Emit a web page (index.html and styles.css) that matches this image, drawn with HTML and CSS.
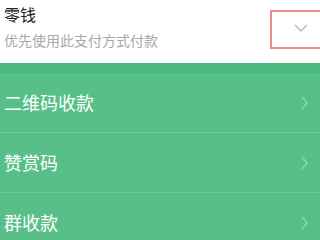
FILE: index.html
```html
<!DOCTYPE html>
<html>
<head>
<meta charset="utf-8">
<link rel="stylesheet" href="styles.css">
</head>
<body>
<div class="header">
  <div class="info">
    <div class="title">零钱</div>
    <div class="sub">优先使用此支付方式付款</div>
  </div>
  <div class="dropbox">
    <svg width="14" height="8" viewBox="0 0 14 8"><path d="M1 1 L7 7 L13 1" fill="none" stroke="#b8b8b8" stroke-width="1.4"/></svg>
  </div>
</div>
<div class="band"></div>
<div class="list">
  <div class="row"><span>二维码收款</span><svg class="chev" width="7" height="14" viewBox="0 0 7 14"><path d="M1 1 L6 7 L1 13" fill="none" stroke="#8fdcae" stroke-width="1.3"/></svg></div>
  <div class="row"><span>赞赏码</span><svg class="chev" width="7" height="14" viewBox="0 0 7 14"><path d="M1 1 L6 7 L1 13" fill="none" stroke="#8fdcae" stroke-width="1.3"/></svg></div>
  <div class="row"><span>群收款</span><svg class="chev" width="7" height="14" viewBox="0 0 7 14"><path d="M1 1 L6 7 L1 13" fill="none" stroke="#8fdcae" stroke-width="1.3"/></svg></div>
</div>
</body>
</html>
```
FILE: styles.css
```css
html, body {
  margin: 0;
  padding: 0;
  width: 320px;
  height: 240px;
  overflow: hidden;
  background: #58bf88;
  font-family: "Noto Sans CJK SC", "Noto Sans", sans-serif;
}
.header {
  height: 63px;
  background: #ffffff;
  display: flex;
  align-items: flex-start;
  justify-content: space-between;
}
.info {
  padding-left: 4px;
  padding-top: 4px;
}
.title {
  font-size: 16px;
  line-height: 20px;
  color: #222222;
}
.sub {
  font-size: 14px;
  line-height: 18px;
  margin-top: 7px;
  color: #a8a8a8;
}
.dropbox {
  margin-top: 10px;
  width: 50px;
  height: 39px;
  border: 2px solid #f08c8c;
  border-right: none;
  box-sizing: border-box;
  display: flex;
  align-items: center;
  padding-left: 22px;
  padding-bottom: 3px;
}
.band {
  height: 10px;
  background: #4cb97d;
}
.list {
  display: flex;
  flex-direction: column;
}
.row {
  height: 59px;
  border-bottom: 1px solid #6ecb99;
  display: flex;
  align-items: center;
  justify-content: space-between;
  padding: 0 12px 0 4px;
  color: #ffffff;
  font-size: 18px;
}
.row span {
  margin-top: -1px;
}
.chev {
  display: block;
}
```
